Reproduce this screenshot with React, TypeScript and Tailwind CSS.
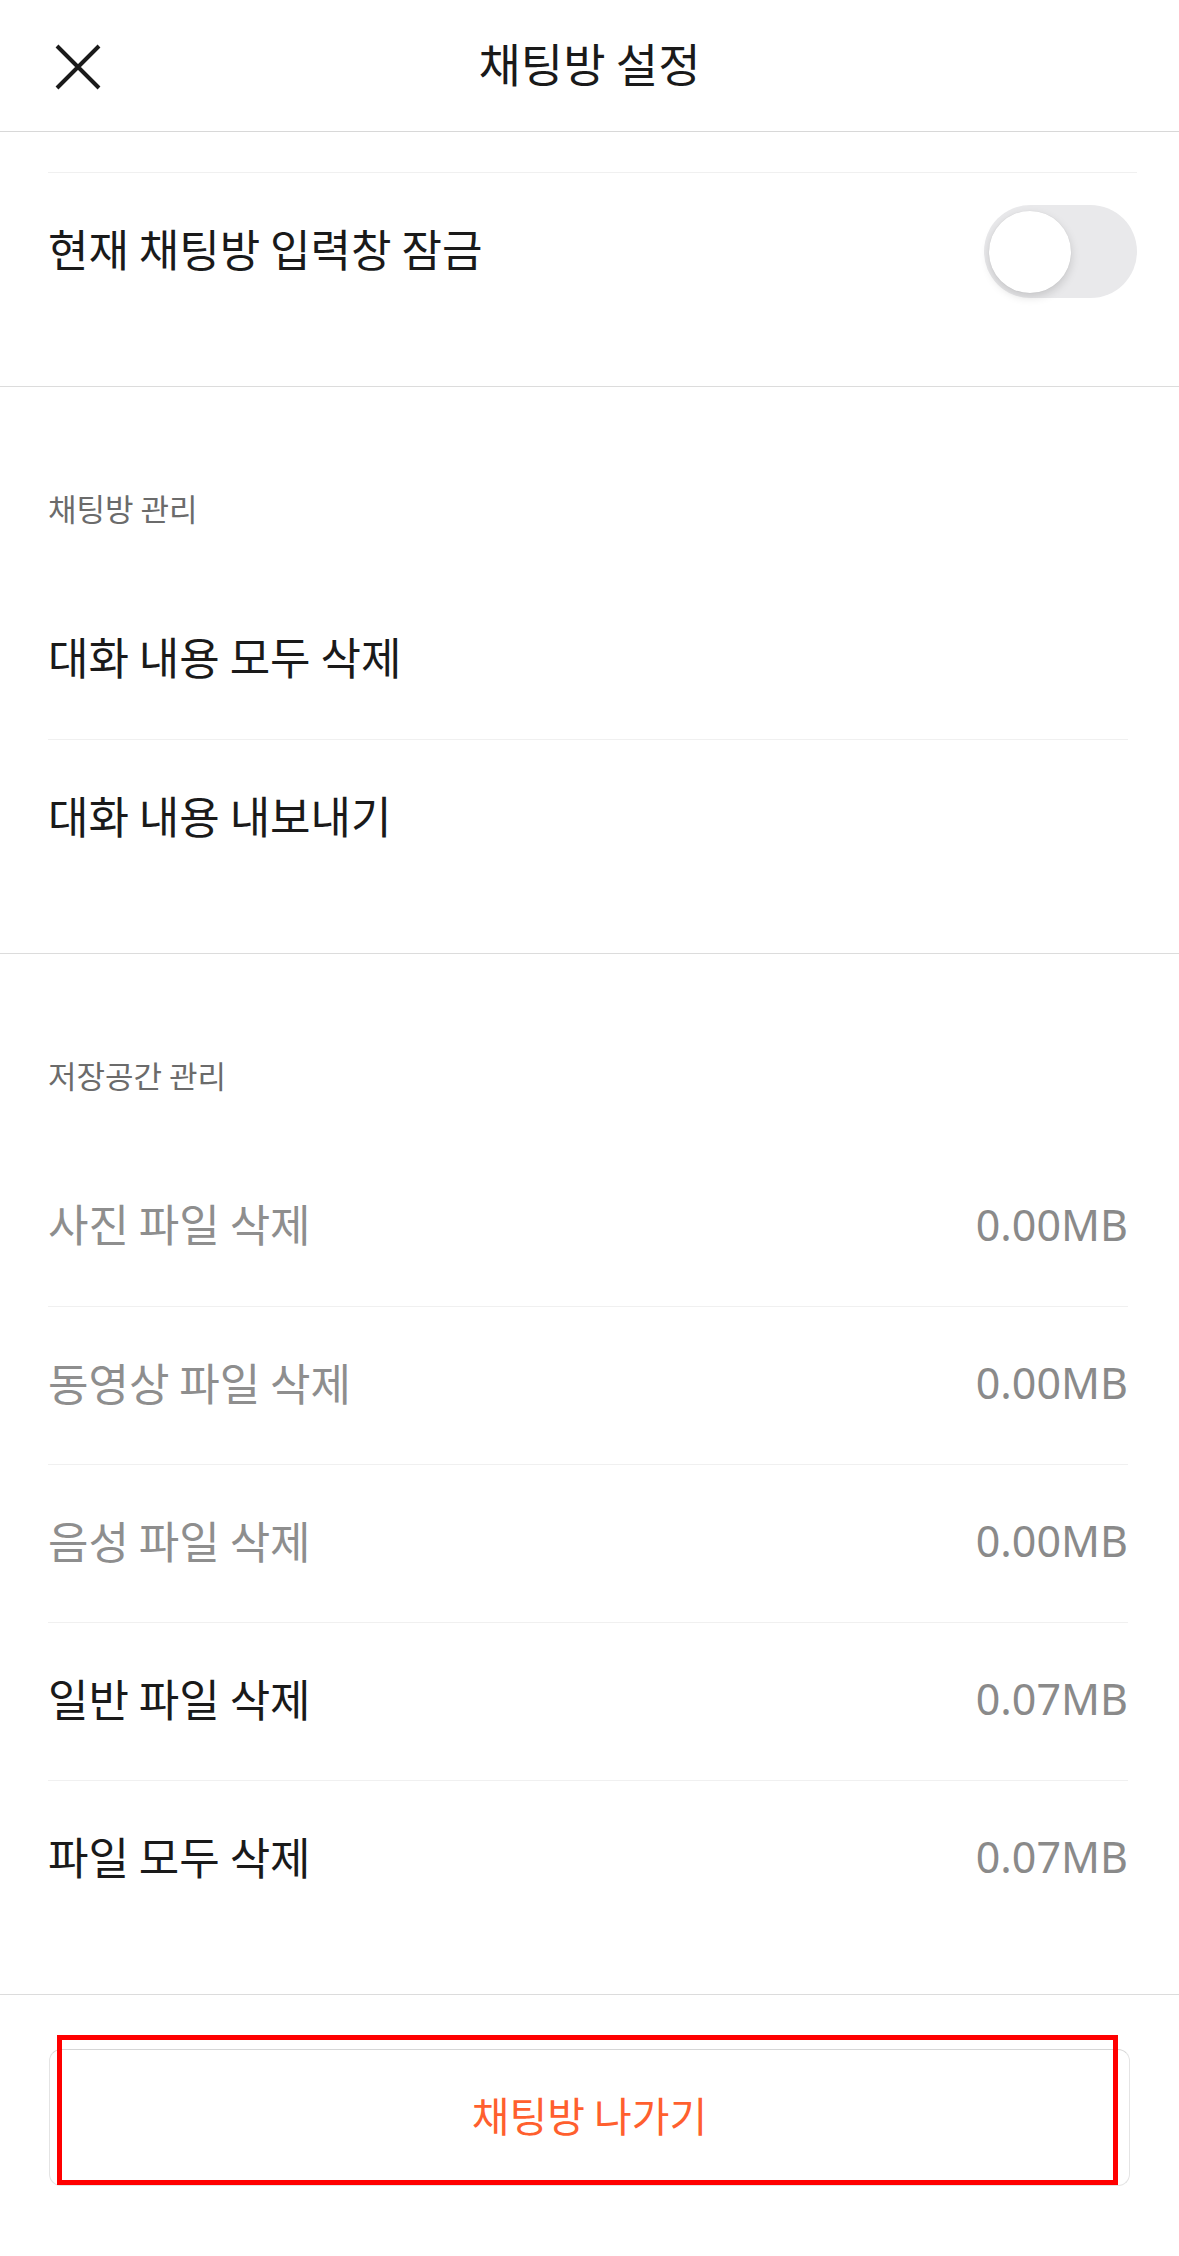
import React from "react";

type Row = { label: string; value?: string; muted?: boolean };

const chatRows: Row[] = [{ label: "대화 내용 모두 삭제" }, { label: "대화 내용 내보내기" }];

const storageRows: Row[] = [
  { label: "사진 파일 삭제", value: "0.00MB", muted: true },
  { label: "동영상 파일 삭제", value: "0.00MB", muted: true },
  { label: "음성 파일 삭제", value: "0.00MB", muted: true },
  { label: "일반 파일 삭제", value: "0.07MB" },
  { label: "파일 모두 삭제", value: "0.07MB" },
];

function CloseIcon() {
  return (
    <svg width="46" height="46" viewBox="0 0 46 46" fill="none">
      <path d="M2 2L44 44M44 2L2 44" stroke="#1a1a1a" strokeWidth="4" />
    </svg>
  );
}

function Toggle() {
  return (
    <div className="flex h-[93px] w-[153px] items-center rounded-full bg-[#e9e9eb] pl-[5px]">
      <div className="h-[82px] w-[82px] rounded-full bg-white shadow-[0_4px_10px_rgba(0,0,0,0.15),0_0_1px_rgba(0,0,0,0.12)]" />
    </div>
  );
}

function SettingRow({ row, first }: { row: Row; first?: boolean }) {
  return (
    <li
      className={`flex h-[158px] items-center justify-between ${
        first ? "" : "border-t border-[#f0f0f0]"
      }`}
    >
      <span
        className={`pb-[8px] text-[44px] leading-none ${
          row.muted ? "text-[#8e8e8e]" : "text-[#1a1a1a]"
        }`}
      >
        {row.label}
      </span>
      {row.value && (
        <span className="pb-[6px] font-['Noto_Sans',sans-serif] text-[43px] leading-none text-[#8a8a8a]">
          {row.value}
        </span>
      )}
    </li>
  );
}

function Section({ title, rows }: { title: string; rows: Row[] }) {
  return (
    <section className="border-t border-[#dcdcdc] pl-[48px] pr-[51px] pb-[56px] pt-[104px]">
      <h2 className="h-[34px] text-[31px] leading-[34px] text-[#6b6b6b]">{title}</h2>
      <ul className="mt-[56px]">
        {rows.map((row, i) => (
          <SettingRow key={row.label} row={row} first={i === 0} />
        ))}
      </ul>
    </section>
  );
}

export default function App() {
  return (
    <div className="min-h-[2256px] w-[1179px] bg-white font-['Noto_Sans_CJK_KR','Noto_Sans',sans-serif]">
      <header className="grid h-[132px] grid-cols-[1fr_auto_1fr] items-center border-b border-[#d8d8d8]">
        <div className="pl-[55px] pt-[2px]">
          <CloseIcon />
        </div>
        <h1 className="pb-[8px] text-[46px] leading-none text-[#1a1a1a]">채팅방 설정</h1>
        <div />
      </header>

      <div className="pl-[48px] pr-[42px] pt-[40px] pb-[56px]">
        <div className="flex h-[158px] items-center justify-between border-t border-[#f0f0f0]">
          <span className="pb-[8px] text-[44px] leading-none text-[#1a1a1a]">
            현재 채팅방 입력창 잠금
          </span>
          <Toggle />
        </div>
      </div>

      <Section title="채팅방 관리" rows={chatRows} />
      <Section title="저장공간 관리" rows={storageRows} />

      <div className="border-t border-[#dcdcdc] px-[49px] pt-[54px]">
        <div className="relative">
          <button className="flex h-[137px] w-full items-center justify-center rounded-[12px] border border-[#e4e4e4] border-t-[#d6d6d6] bg-white pb-[6px] text-[41px] leading-none text-[#ff5f2e]">
            채팅방 나가기
          </button>
          <div className="pointer-events-none absolute left-[8px] top-[-14px] h-[150px] w-[1061px] border-[5px] border-[#ff0000]" />
        </div>
      </div>
    </div>
  );
}
